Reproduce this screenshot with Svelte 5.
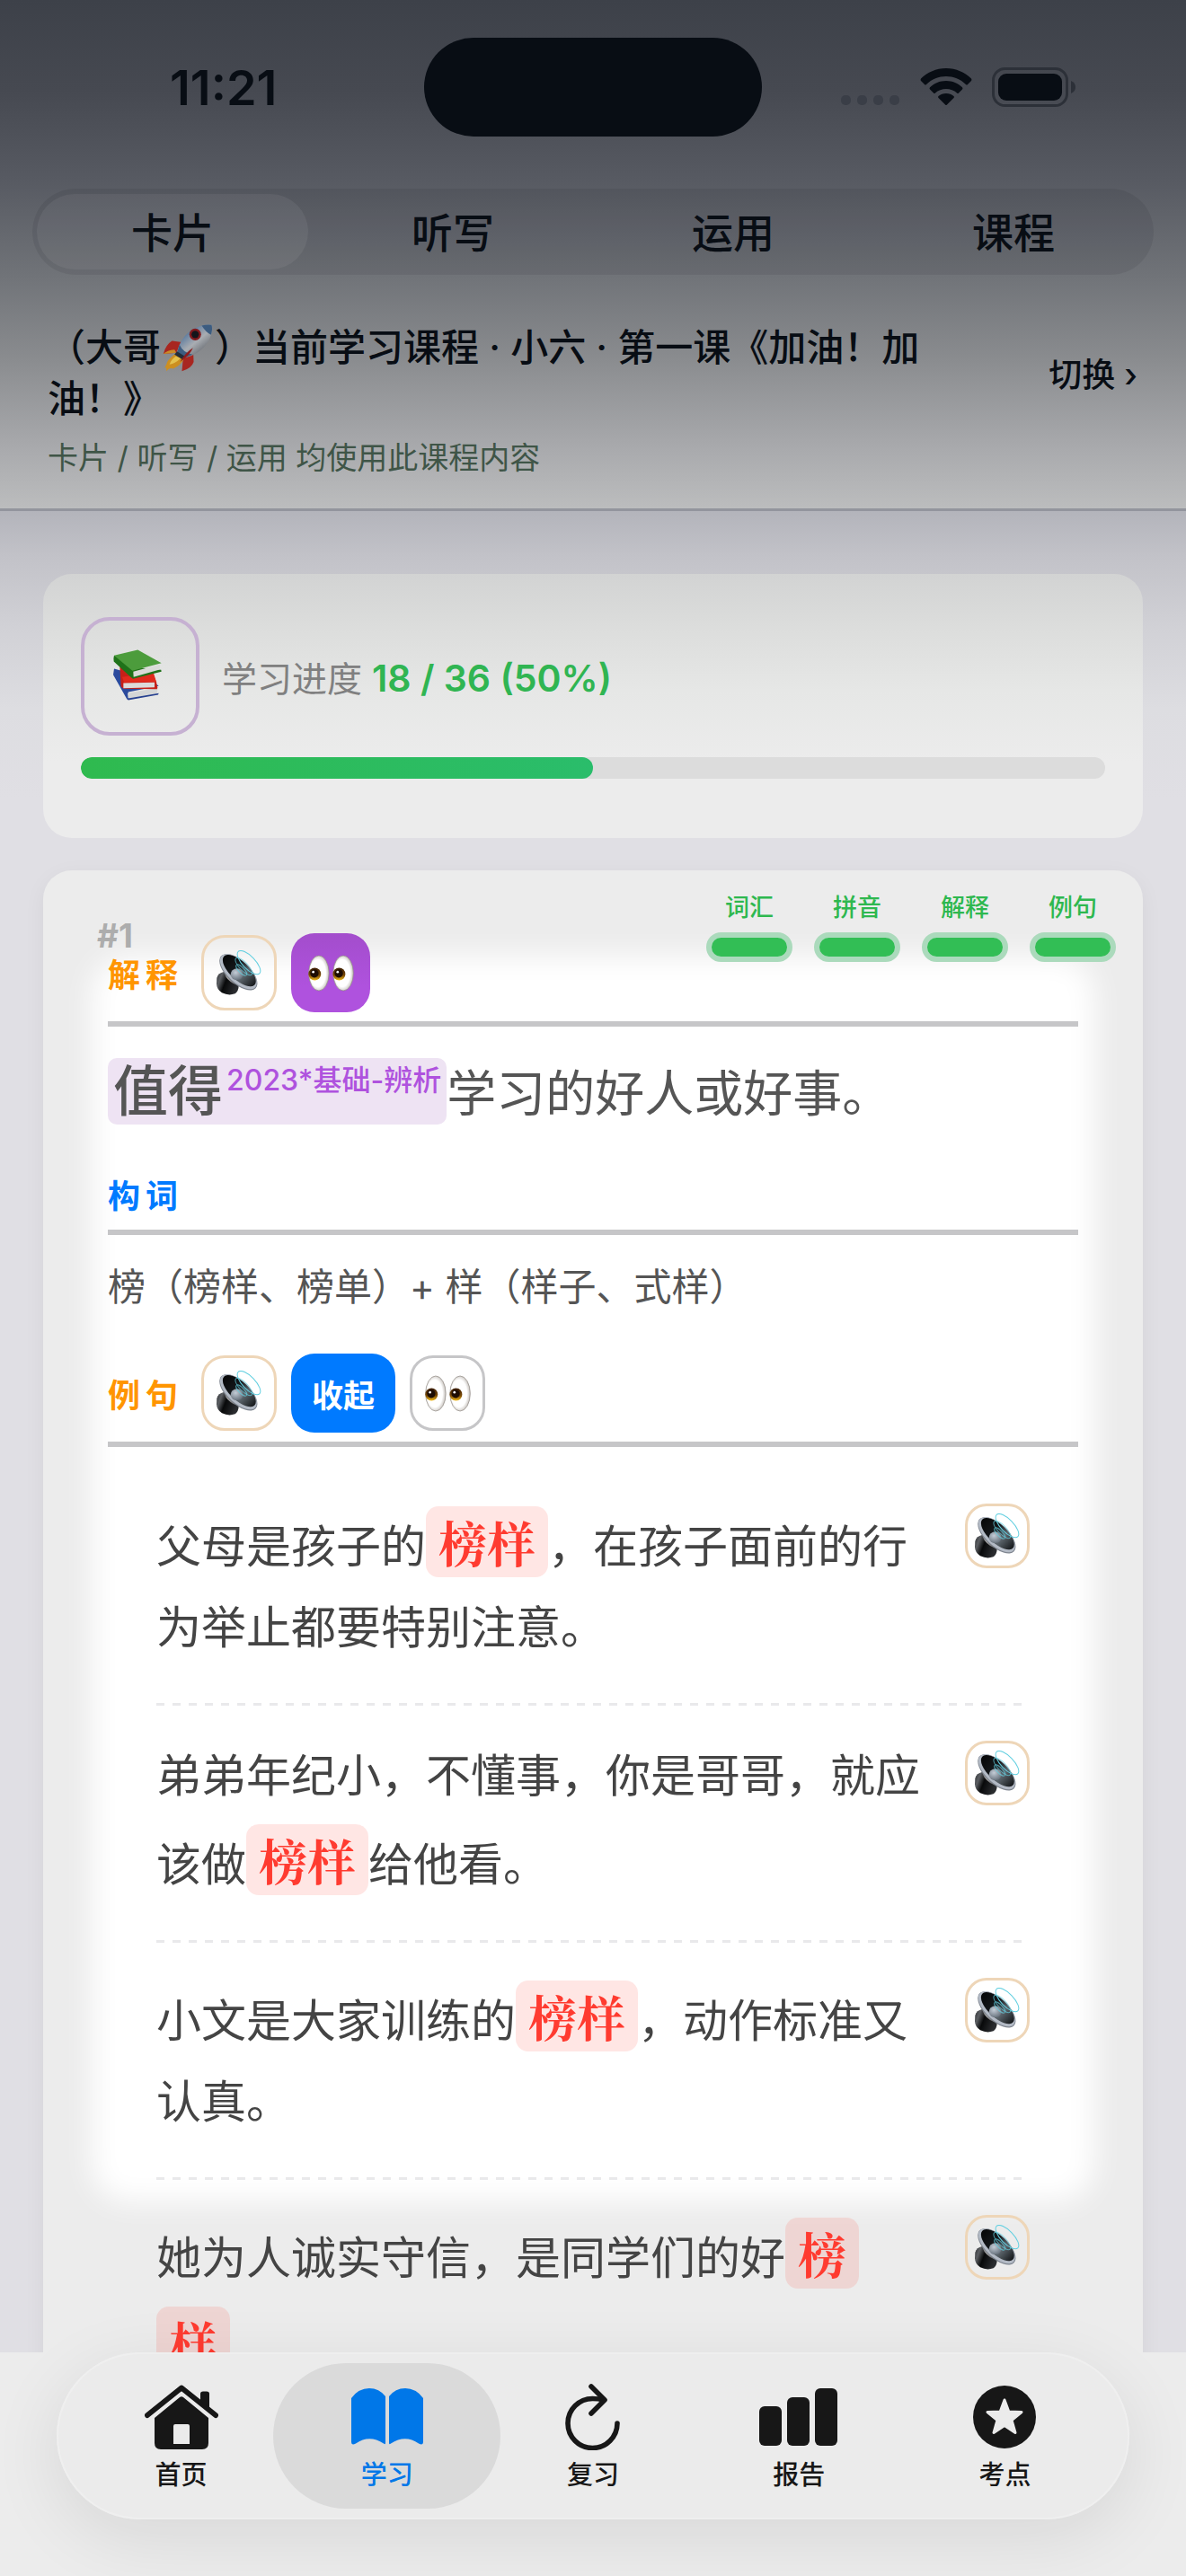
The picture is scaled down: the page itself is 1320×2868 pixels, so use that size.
<script lang="ts">
  type Part = { text: string; mark?: boolean };

  const tabs = ["卡片", "听写", "运用", "课程"];
  let activeTab = $state("卡片");

  const learned = 18;
  const total = 36;
  const percent = Math.round((learned / total) * 100);

  const steps = ["词汇", "拼音", "解释", "例句"];

  const sentences: Part[][] = [
    [
      { text: "父母是孩子的" },
      { text: "榜样", mark: true },
      { text: "，在孩子面前的行为举止都要特别注意。" },
    ],
    [
      { text: "弟弟年纪小，不懂事，你是哥哥，就应该做" },
      { text: "榜样", mark: true },
      { text: "给他看。" },
    ],
    [
      { text: "小文是大家训练的" },
      { text: "榜样", mark: true },
      { text: "，动作标准又认真。" },
    ],
    [
      { text: "她为人诚实守信，是同学们的好" },
      { text: "榜样", mark: true },
      { text: "。" },
    ],
  ];

  const navItems = [
    { id: "home", label: "首页" },
    { id: "study", label: "学习" },
    { id: "review", label: "复习" },
    { id: "report", label: "报告" },
    { id: "exam", label: "考点" },
  ];
  let activeNav = $state("study");
</script>

{#snippet speaker()}
  <svg class="speaker" viewBox="0 0 150 150" aria-hidden="true">
    <defs>
      <linearGradient id="magnet" x1="0" x2="1" y1="0" y2="0.4">
        <stop offset="0" stop-color="#2c2e31" />
        <stop offset="0.25" stop-color="#5c5f63" />
        <stop offset="0.5" stop-color="#08090a" />
        <stop offset="1" stop-color="#2a2c2f" />
      </linearGradient>
      <linearGradient id="basket" x1="0" x2="1" y1="0" y2="0.6">
        <stop offset="0" stop-color="#3a3c3f" />
        <stop offset="0.4" stop-color="#a9a7a6" />
        <stop offset="1" stop-color="#2f3134" />
      </linearGradient>
      <linearGradient id="cone" x1="0" x2="1" y1="0" y2="0">
        <stop offset="0" stop-color="#060708" />
        <stop offset="0.4" stop-color="#15181b" />
        <stop offset="0.65" stop-color="#5d666d" />
        <stop offset="1" stop-color="#15181a" />
      </linearGradient>
      <radialGradient id="dome" cx="0.4" cy="0.35" r="0.7">
        <stop offset="0" stop-color="#c3ccd6" />
        <stop offset="1" stop-color="#66707b" />
      </radialGradient>
    </defs>
    <path
      d="M1 92 Q6 76 24 72 L74 118 Q74 136 62 145 Q40 153 18 142 Q0 130 0 112 Z"
      fill="url(#magnet)"
    />
    <path d="M24 54 Q22 74 32 90 Q48 112 76 118 L112 122 L40 40 Z" fill="url(#basket)" />
    <ellipse cx="73" cy="73" rx="79" ry="38" transform="rotate(43 73 73)" fill="#7d848e" />
    <ellipse cx="73" cy="71" rx="77" ry="36" transform="rotate(43 73 71)" fill="#b3bac5" />
    <ellipse cx="76" cy="68" rx="70" ry="31" transform="rotate(43 76 68)" fill="url(#cone)" />
    <ellipse cx="68" cy="80" rx="21" ry="19" fill="url(#dome)" />
    <g fill="none" stroke="#62cfe0" stroke-width="3">
      <ellipse cx="108" cy="41" rx="51" ry="21" transform="rotate(46 108 41)" />
      <ellipse cx="91" cy="54" rx="38" ry="14" transform="rotate(46 91 54)" stroke-opacity="0.7" />
      <ellipse cx="83" cy="66" rx="24" ry="9" transform="rotate(46 83 66)" stroke-opacity="0.7" />
    </g>
  </svg>
{/snippet}

{#snippet eyes()}
  <svg class="eyes" viewBox="0 0 154 122" aria-hidden="true">
    <defs>
      <radialGradient id="white" cx="0.45" cy="0.5" r="0.55">
        <stop offset="0.7" stop-color="#ffffff" />
        <stop offset="1" stop-color="#c4bfba" />
      </radialGradient>
      <linearGradient id="iris" x1="0" x2="0" y1="0" y2="1">
        <stop offset="0" stop-color="#3a1c02" />
        <stop offset="0.6" stop-color="#7a4a05" />
        <stop offset="1" stop-color="#f0bb1c" />
      </linearGradient>
    </defs>
    {#each [36, 118] as cx}
      <ellipse {cx} cy="61" rx="34" ry="59" fill="url(#white)" stroke="#8b8580" stroke-width="2" />
      <circle cx={cx - 14} cy="64" r="21" fill="url(#iris)" />
      <circle cx={cx - 15} cy="62" r="14" fill="#1d0d03" />
      <circle cx={cx - 19} cy="57" r="4" fill="#fff" />
    {/each}
  </svg>
{/snippet}

{#snippet navIcon(id)}
  {#if id === "home"}
    <svg width="82" height="72" viewBox="0 0 82 72" aria-hidden="true">
      <path
        d="M3 34 L41 3.500 L79 34"
        fill="none"
        stroke="currentColor"
        stroke-width="6"
        stroke-linecap="round"
        stroke-linejoin="round"
      />
      <path d="M62 10 Q62 7.500 65 7.500 H69 Q72 7.500 72 10 V26 L62 18 Z" fill="currentColor" />
      <path
        fill-rule="evenodd"
        d="M39 14 Q41 12.500 43 14 L71 37 V65 Q71 72 64 72 H18 Q11 72 11 65 V37 Z M34 44 Q32 44 32 46 V66 H50 V46 Q50 44 48 44 Z"
        fill="currentColor"
      />
    </svg>
  {:else if id === "study"}
    <svg width="80" height="64" viewBox="0 0 80 64" aria-hidden="true">
      <path
        d="M0 11 Q8 0 20 0 Q31 0 38 9 V61 Q38 63 36 61.500 Q20 51 5 61.500 Q0 64 0 60 Z"
        fill="currentColor"
      />
      <path
        d="M80 11 Q72 0 60 0 Q49 0 42 9 V61 Q42 63 44 61.500 Q60 51 75 61.500 Q80 64 80 60 Z"
        fill="currentColor"
      />
    </svg>
  {:else if id === "review"}
    <svg width="62" height="74" viewBox="0 0 62 74" aria-hidden="true">
      <g
        fill="none"
        stroke="currentColor"
        stroke-width="5.600"
        stroke-linecap="round"
        stroke-linejoin="round"
      >
        <path d="M58 44 A27.500 27.500 0 1 1 30.500 16.500 Q37 16.500 43 18" />
        <path d="M29 3 L44 18 L29 33" />
      </g>
    </svg>
  {:else if id === "report"}
    <svg width="88" height="64" viewBox="0 0 88 64" fill="currentColor" aria-hidden="true">
      <rect x="0" y="20" width="25" height="44" rx="6" />
      <rect x="31" y="10" width="25" height="54" rx="6" />
      <rect x="62" y="0" width="25" height="64" rx="6" />
    </svg>
  {:else}
    <svg width="70" height="70" viewBox="0 0 70 70" aria-hidden="true">
      <circle cx="35" cy="35" r="35" fill="currentColor" />
      <path
        d="M35 16 L39.800 29 L54 29.500 L43 38.500 L47 52.500 L35 44.500 L23 52.500 L27 38.500 L16 29.500 L30.200 29 Z"
        fill="#ebebeb"
        stroke="#ebebeb"
        stroke-width="3"
        stroke-linejoin="round"
      />
    </svg>
  {/if}
{/snippet}

<div class="page">
  <header>
    <div class="status">
      <span class="time">11:21</span>
      <span class="island"></span>
      <div class="status-icons">
        <svg width="66" height="42" viewBox="0 0 66 42" fill="#3a3e47" aria-hidden="true">
          {#each [0, 18, 36, 54] as x}
            <rect {x} y="30" width="11" height="11" rx="5" />
          {/each}
        </svg>
        <svg width="58" height="42" viewBox="0 0 58 42" fill="#080d14" aria-hidden="true">
          <path
            d="M29 0 C40 0 50 4.500 57 11.500 Q58 13 57 14 L53 18 Q52 19 51 18 C45 12 37 9 29 9 C21 9 13 12 7 18 Q6 19 5 18 L1 14 Q0 13 1 11.500 C8 4.500 18 0 29 0 Z"
          />
          <path
            d="M29 14 C36 14 42.500 16.800 47 21.200 Q48 22.500 47 23.500 L43 27.500 Q42 28.500 41 27.500 C38 24.500 33.500 23 29 23 C24.500 23 20 24.500 17 27.500 Q16 28.500 15 27.500 L11 23.500 Q10 22.500 11 21.200 C15.500 16.800 22 14 29 14 Z"
          />
          <path d="M29 28 Q34 28 37.500 31 Q38.500 32 37.500 33 L30 40.500 Q29 41.500 28 40.500 L20.500 33 Q19.500 32 20.500 31 Q24 28 29 28 Z" />
        </svg>
        <svg class="battery" width="94" height="44" viewBox="0 0 94 44" aria-hidden="true">
          <rect x="1.500" y="1.500" width="82" height="41" rx="13" fill="none" stroke="#2c3038" stroke-width="3" />
          <rect x="7" y="7" width="71" height="30" rx="9" fill="#080d14" />
          <path d="M88 15 Q93 17 93 22 Q93 27 88 29 Z" fill="#2c3038" />
        </svg>
      </div>
    </div>

    <div class="tabs">
      {#each tabs as tab}
        <button class={activeTab === tab ? "tab tab-selected" : "tab"} onclick={() => (activeTab = tab)}>
          {tab}
        </button>
      {/each}
    </div>

    <div class="course">
      <h1>
        （大哥<svg class="rocket" viewBox="0 0 162 154" aria-label="🚀" role="img">
          <defs>
            <linearGradient id="hull" x1="0.200" x2="0.800" y1="0.200" y2="0.900">
              <stop offset="0" stop-color="#4c709a" />
              <stop offset="0.5" stop-color="#a9adb2" />
              <stop offset="1" stop-color="#5b5f66" />
            </linearGradient>
          </defs>
          <path d="M2 96 Q10 66 30 54 L62 58 L44 92 Z" fill="#a82620" />
          <path d="M2 96 L44 92 L38 82 Q14 84 2 96 Z" fill="#c98a28" />
          <path d="M62 152 Q94 142 100 122 L98 74 L66 108 Z" fill="#a82620" />
          <path d="M40 96 Q12 118 12 130 L6 142 L12 140 L12 152 Q22 138 34 144 Q58 134 70 110 Z" fill="#cd8f20" />
          <path d="M42 104 Q26 116 22 130 Q40 128 58 110 Z" fill="#e3c14e" />
          <path d="M46 94 Q56 40 102 14 Q134 -2 158 2 Q164 26 146 58 Q120 98 68 110 Z" fill="url(#hull)" />
          <path d="M126 4 Q144 0 158 2 Q162 16 156 34 Q140 26 126 4 Z" fill="#3c5c80" />
          <path d="M54 66 L46 94 L68 110 L96 98 Q66 92 54 66 Z" fill="#3c5c80" />
          <path d="M38 98 L46 88 L72 104 L64 114 Z" fill="#232d39" />
          <circle cx="105" cy="33" r="19" fill="#821a1d" />
          <circle cx="105" cy="33" r="12" fill="#14161b" />
          <path d="M56 122 Q72 92 98 76 Q88 100 56 122 Z" fill="#8f1c1c" />
        </svg>）当前学习课程 · 小六 · 第一课《加油！加油！》
      </h1>
      <button class="switch">切换 ›</button>
    </div>
    <p class="hint">卡片 / 听写 / 运用 均使用此课程内容</p>
  </header>

  <main>
    <section class="progress-card">
      <div class="progress-head">
        <div class="book-box">
          <svg width="54" height="57" viewBox="0 0 162 170" aria-hidden="true">
            <path d="M3 64 L0 84 L46 166 L54 166 L50 142 L152 122 L120 96 Z" fill="#2b4a9d" />
            <path d="M48 146 L148 128 L147 146 L50 164 Z" fill="#d4d6d6" />
            <path d="M46 164 L152 146 L150 151 L50 169 Z" fill="#27418f" />
            <path d="M22 56 L26 124 L34 131 L146 132 L148 128 L144 108 L130 74 Z" fill="#c62018" />
            <path d="M30 92 L134 76 L144 108 L36 110 Z" fill="#e02a1d" />
            <path d="M34 112 L138 110 L138 126 L34 129 Z" fill="#dcdada" />
            <path d="M3 20 Q0 30 2 40 L58 92 L66 98 L161 74 L160 68 L80 60 Z" fill="#1f7219" />
            <path d="M3 20 L82 1 L161 45 L64 71 Z" fill="#4c9c3c" />
            <path d="M67 74 L156 50 L155 67 L68 92 Z" fill="#d9dbd7" />
          </svg>
        </div>
        <span class="progress-label" id="progress-label">
          学习进度 <strong>{learned} / {total} ({percent}%)</strong>
        </span>
      </div>
      <div class="bar" role="progressbar" aria-labelledby="progress-label" aria-valuenow={percent}>
        <div class="bar-fill" style="width: {percent}%"></div>
      </div>
    </section>

    <article class="word-card">
      <div class="glow"></div>
      <div class="steps">
        {#each steps as step}
          <div class="step">
            <span>{step}</span>
            <i></i>
          </div>
        {/each}
      </div>
      <span class="number">#1</span>

      <div class="section-head">
        <h2>解释</h2>
        <button class="icon-btn" aria-label="朗读解释">{@render speaker()}</button>
        <button class="icon-btn purple" aria-label="显示标注">{@render eyes()}</button>
      </div>
      <p class="meaning">
        <span class="keyword"><b>值得</b><sup>2023*基础-辨析</sup></span>学习的好人或好事。
      </p>

      <div class="section-head plain">
        <h2 class="blue-title">构词</h2>
      </div>
      <p class="compose">榜（榜样、榜单）+ 样（样子、式样）</p>

      <div class="section-head">
        <h2>例句</h2>
        <button class="icon-btn" aria-label="朗读例句">{@render speaker()}</button>
        <button class="fold">收起</button>
        <button class="icon-btn grey" aria-label="隐藏例句">{@render eyes()}</button>
      </div>
      <ul class="sentences">
        {#each sentences as parts}
          <li>
            <p>{#each parts as part}{#if part.mark}<mark>{part.text}</mark>{:else}{part.text}{/if}{/each}</p>
            <button class="icon-btn small" aria-label="朗读">{@render speaker()}</button>
          </li>
        {/each}
      </ul>
    </article>
  </main>

  <footer>
    <nav>
      {#each navItems as { id, label }}
        <button class={activeNav === id ? "nav-item nav-item-active" : "nav-item"} onclick={() => (activeNav = id)}>
          <span class="nav-icon">{@render navIcon(id)}</span>
          {label}
        </button>
      {/each}
    </nav>
  </footer>
</div>

<style>
  :global(body) {
    background-color: #e0dfe4;
  }
  .page {
    display: flex;
    flex-direction: column;
    height: 100vh;
    font-family: Inter, "Noto Sans CJK SC", sans-serif;
    color: #080d14;
  }
  h1,
  h2,
  p,
  ul {
    margin: 0;
    padding: 0;
  }
  button {
    font-family: inherit;
    color: inherit;
    background: none;
    border: none;
    padding: 0;
    cursor: pointer;
  }
  svg {
    display: block;
    flex: none;
  }

  header {
    flex: none;
    padding: 42px 36px 32px;
    background: linear-gradient(
      #3d4149 0,
      #464951 100px,
      #575a62 200px,
      #707378 306px,
      #8a8c8f 400px,
      #a9aaad 500px,
      #bcbdbe 567px
    );
    border-bottom: 3px solid #93959d;
  }
  .status {
    display: grid;
    grid-template-columns: 1fr 376px 1fr;
    align-items: center;
  }
  .time {
    padding-left: 153px;
    font-size: 54px;
    font-weight: 600;
  }
  .island {
    height: 110px;
    border-radius: 55px;
    background-color: #080d14;
  }
  .status-icons {
    display: flex;
    justify-content: flex-end;
    align-items: center;
    gap: 22px;
    padding-right: 86px;
  }
  .tabs {
    display: grid;
    grid-template-columns: repeat(4, 1fr);
    height: 96px;
    margin-top: 58px;
    border-radius: 48px;
    background-color: rgba(0, 5, 15, 0.07);
  }
  .tab {
    margin: 6px 5px;
    padding-bottom: 4px;
    border-radius: 42px;
    font-size: 46px;
    font-weight: 500;
  }
  .tab-selected {
    background-color: rgba(255, 250, 250, 0.06);
  }
  .course {
    display: grid;
    grid-template-columns: 1fr auto;
    align-items: center;
    gap: 120px;
    margin-top: 52px;
    padding: 0 18px 0 17px;
  }
  h1 {
    font-size: 42px;
    line-height: 57px;
    font-weight: 500;
  }
  .rocket {
    display: inline-block;
    width: 56px;
    height: 53px;
    margin: -10px 2px 0;
    vertical-align: -12px;
  }
  .switch {
    font-size: 37px;
    font-weight: 500;
  }
  .hint {
    margin-top: 14px;
    padding-left: 17px;
    font-size: 34px;
    line-height: 48px;
    color: #3f5547;
  }

  main {
    flex: 1;
    min-height: 0;
    display: flex;
    flex-direction: column;
    gap: 36px;
    padding: 70px 48px 0;
    overflow-y: auto;
    scrollbar-width: none;
    background: linear-gradient(
      #b3b4bb 0,
      #c2c2c8 50px,
      #d1d1d6 130px,
      #dddde1 220px,
      #e0dfe4 320px
    );
  }
  .progress-card {
    flex: none;
    padding: 48px 42px 66px;
    border-radius: 32px;
    background: linear-gradient(#d2d3d3 0, #dcdddc 60px, #e6e7e6 130px, #ececec 210px);
  }
  .progress-head {
    display: flex;
    align-items: center;
    gap: 25px;
    margin-bottom: 24px;
  }
  .book-box {
    display: flex;
    align-items: center;
    justify-content: center;
    box-sizing: border-box;
    width: 132px;
    height: 132px;
    padding: 0 6px 4px 0;
    border: 4px solid #c6b1d2;
    border-radius: 32px;
  }
  .progress-label {
    font-size: 39px;
    color: #808080;
  }
  .progress-label strong {
    font-size: 41px;
    font-weight: 600;
    color: #30b552;
  }
  .bar {
    height: 24px;
    border-radius: 12px;
    overflow: hidden;
    background-color: #dcdcdc;
  }
  .bar-fill {
    height: 100%;
    border-radius: 12px;
    background: linear-gradient(90deg, #2fba4f, #2abd6b);
  }

  .word-card {
    position: relative;
    flex: none;
    padding: 70px 72px 60px;
    border-radius: 32px;
    background-color: #ececec;
    box-shadow: 0 6px 24px rgba(0, 0, 0, 0.05);
  }
  .word-card > * {
    position: relative;
  }
  .word-card .glow {
    position: absolute;
    top: 96px;
    left: 54px;
    right: 54px;
    height: 1386px;
    border-radius: 40px;
    background-color: #fff;
    filter: blur(16px);
  }
  .word-card .steps {
    position: absolute;
    top: 22px;
    right: 30px;
    display: flex;
    gap: 24px;
  }
  .step {
    display: flex;
    flex-direction: column;
    align-items: center;
    gap: 7px;
    font-size: 27px;
    line-height: 40px;
    font-weight: 500;
    color: #2eb84f;
  }
  .step i {
    width: 84px;
    height: 21px;
    border: 6px solid #abdabc;
    border-radius: 17px;
    background-color: #32be55;
  }
  .word-card .number {
    position: absolute;
    top: 50px;
    left: 60px;
    font-size: 37px;
    font-weight: 700;
    color: #adadad;
  }
  .section-head {
    display: flex;
    align-items: center;
    gap: 16px;
    height: 88px;
    padding-bottom: 10px;
    border-bottom: 6px solid #c6c6c8;
  }
  .plain {
    height: 60px;
  }
  h2 {
    width: 88px;
    font-size: 36px;
    font-weight: 700;
    letter-spacing: 6px;
    color: #ff9500;
  }
  .blue-title {
    color: #007aff;
  }
  .icon-btn {
    display: flex;
    align-items: center;
    justify-content: center;
    flex: none;
    box-sizing: border-box;
    width: 84px;
    height: 84px;
    border: 3px solid #eed6b8;
    border-radius: 26px;
  }
  .purple {
    width: 88px;
    height: 88px;
    border: none;
    background: linear-gradient(#a34dcc, #af52de 60px);
  }
  .grey {
    border-color: #c6c6c8;
  }
  .small {
    width: 72px;
    height: 72px;
    margin-top: 6px;
    border-radius: 24px;
  }
  .speaker {
    width: 50px;
    height: 50px;
  }
  .eyes {
    width: 51px;
    height: 41px;
  }
  .fold {
    height: 88px;
    padding: 0 23px;
    border-radius: 26px;
    background-color: #007aff;
    color: #fff;
    font-size: 35px;
    font-weight: 700;
  }
  .meaning {
    margin: 24px 0 32px;
    font-size: 55px;
    line-height: 100px;
    color: #555;
  }
  .keyword {
    display: inline-flex;
    align-items: flex-start;
    gap: 4px;
    height: 74px;
    padding: 0 6px;
    border-radius: 10px;
    background-color: #eee3f3;
    line-height: 74px;
  }
  .keyword b {
    font-size: 61px;
    font-weight: 500;
  }
  .keyword sup {
    font-size: 32px;
    line-height: 50px;
    font-weight: 500;
    color: #af52de;
  }
  .compose {
    margin: 28px 0 44px;
    font-size: 42px;
    line-height: 60px;
    color: #555;
  }
  .sentences {
    margin-top: 24px;
    padding: 0 54px;
    list-style: none;
  }
  .sentences li {
    display: flex;
    justify-content: space-between;
    gap: 24px;
    padding: 33px 0 42px;
    background: repeating-linear-gradient(90deg, #e9e9eb 0 9px, transparent 9px 18px) bottom / 100% 3px no-repeat;
  }
  .sentences p {
    flex: 1;
    font-size: 50px;
    line-height: 90px;
    color: #444;
  }
  mark {
    padding: 1px 14px;
    border-radius: 14px;
    background-color: rgba(255, 59, 48, 0.13);
    color: #ff3b30;
    font-family: "Noto Serif CJK SC", "Liberation Serif", serif;
    font-size: 54px;
    line-height: 98px;
    font-weight: 700;
    -webkit-box-decoration-break: clone;
    box-decoration-break: clone;
  }

  footer {
    position: relative;
    flex: none;
    padding: 0 63px 63px;
    background-color: #ececec;
  }
  nav {
    display: grid;
    grid-template-columns: repeat(5, 1fr);
    padding: 12px 24px;
    border-radius: 93px;
    background-color: #ebebeb;
    box-shadow:
      inset 0 0 0 2px #efefef,
      0 20px 80px rgba(0, 0, 0, 0.09);
  }
  .nav-item {
    display: flex;
    flex-direction: column;
    align-items: center;
    margin: 0 -12px;
    height: 162px;
    border-radius: 81px;
    font-size: 29px;
    line-height: 40px;
    font-weight: 500;
    color: #171717;
  }
  .nav-item-active {
    background-color: #dadada;
    color: #0077e8;
  }
  .nav-icon {
    display: flex;
    align-items: center;
    justify-content: center;
    height: 84px;
    margin: 18px 0 3px;
  }
</style>
